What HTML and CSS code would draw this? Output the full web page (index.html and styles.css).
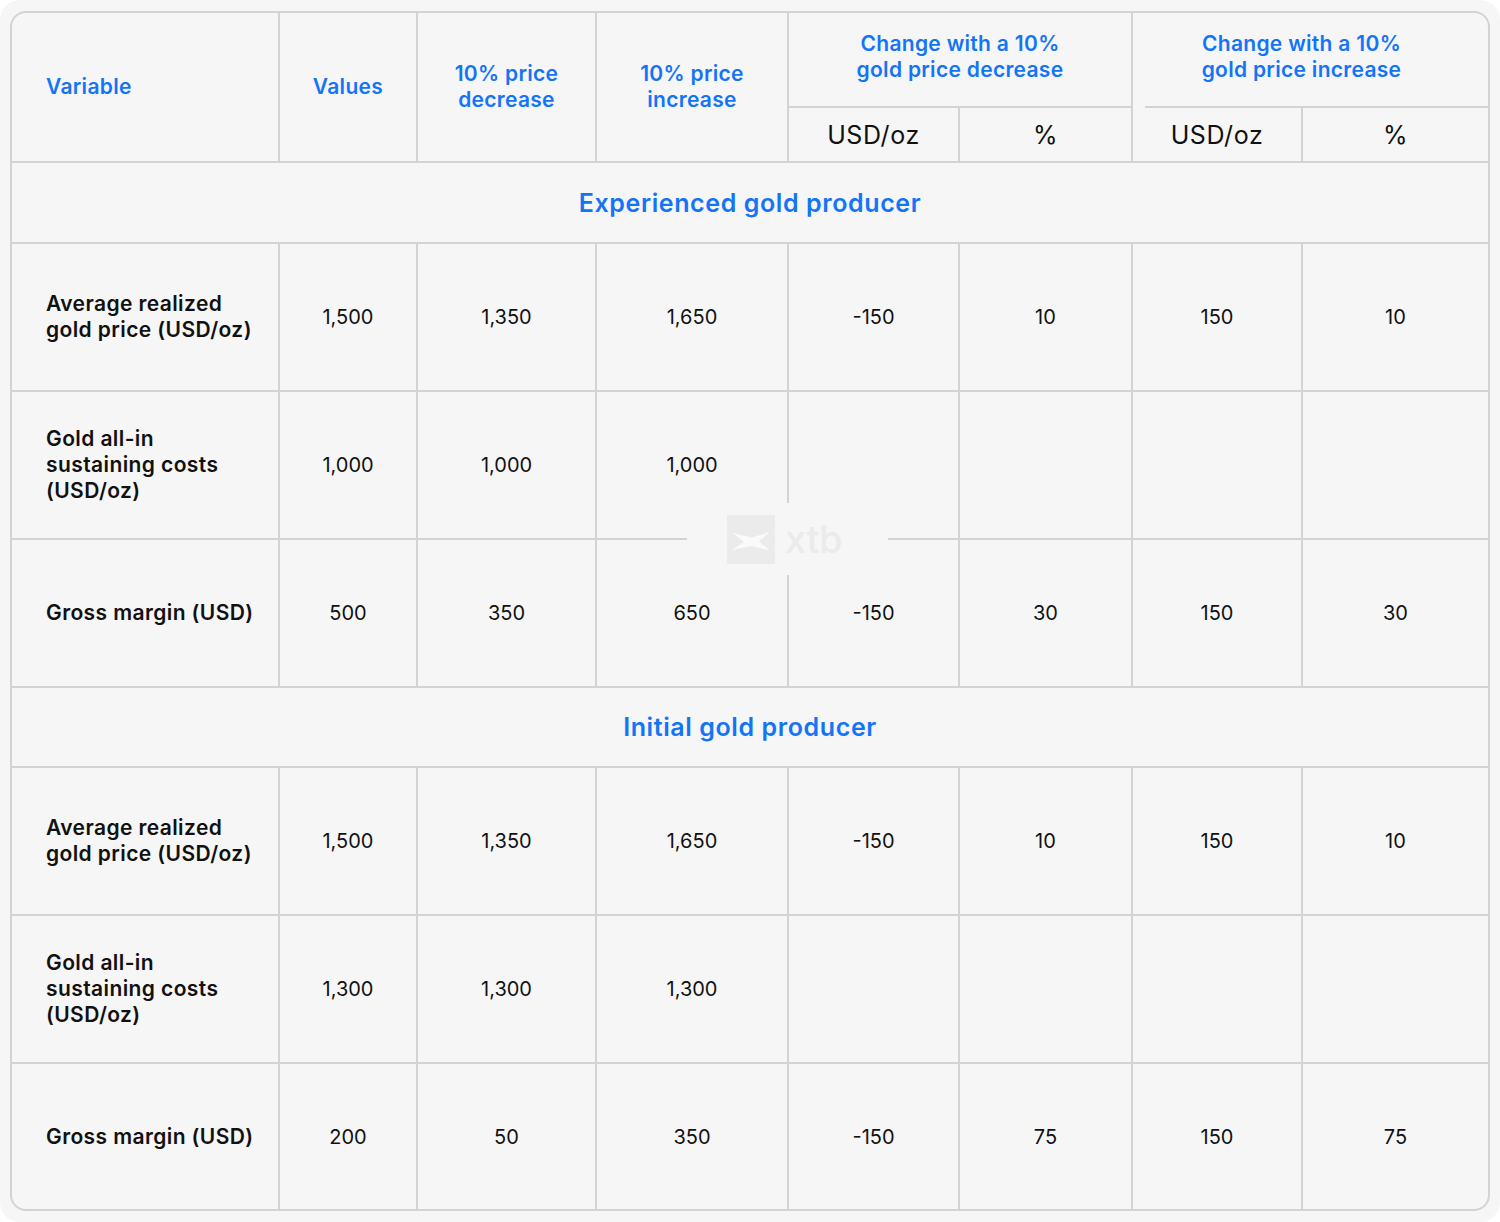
FILE: index.html
```html
<!DOCTYPE html>
<html lang="en">
<head>
<meta charset="utf-8">
<title>Gold producer sensitivity</title>
<link rel="stylesheet" href="styles.css">
</head>
<body>
<div class="page">
  <div class="table">
    <div class="cell head label-col span-h">Variable</div>
    <div class="cell head span-h">Values</div>
    <div class="cell head span-h">10% price<br>decrease</div>
    <div class="cell head span-h">10% price<br>increase</div>
    <div class="cell head group">Change with a 10%<br>gold price decrease</div>
    <div class="cell head group group-last">Change with a 10%<br>gold price increase</div>
    <div class="cell sub">USD/oz</div>
    <div class="cell sub">%</div>
    <div class="cell sub">USD/oz</div>
    <div class="cell sub">%</div>

    <div class="cell section">Experienced gold producer</div>

    <div class="cell label">Average realized<br>gold price (USD/oz)</div>
    <div class="cell num">1,500</div>
    <div class="cell num">1,350</div>
    <div class="cell num">1,650</div>
    <div class="cell num">-150</div>
    <div class="cell num">10</div>
    <div class="cell num">150</div>
    <div class="cell num">10</div>

    <div class="cell label">Gold all-in<br>sustaining costs<br>(USD/oz)</div>
    <div class="cell num">1,000</div>
    <div class="cell num">1,000</div>
    <div class="cell num">1,000</div>
    <div class="cell num"></div>
    <div class="cell num"></div>
    <div class="cell num"></div>
    <div class="cell num"></div>

    <div class="cell label">Gross margin (USD)</div>
    <div class="cell num">500</div>
    <div class="cell num">350</div>
    <div class="cell num">650</div>
    <div class="cell num">-150</div>
    <div class="cell num">30</div>
    <div class="cell num">150</div>
    <div class="cell num">30</div>

    <div class="cell section">Initial gold producer</div>

    <div class="cell label">Average realized<br>gold price (USD/oz)</div>
    <div class="cell num">1,500</div>
    <div class="cell num">1,350</div>
    <div class="cell num">1,650</div>
    <div class="cell num">-150</div>
    <div class="cell num">10</div>
    <div class="cell num">150</div>
    <div class="cell num">10</div>

    <div class="cell label">Gold all-in<br>sustaining costs<br>(USD/oz)</div>
    <div class="cell num">1,300</div>
    <div class="cell num">1,300</div>
    <div class="cell num">1,300</div>
    <div class="cell num"></div>
    <div class="cell num"></div>
    <div class="cell num"></div>
    <div class="cell num"></div>

    <div class="cell label">Gross margin (USD)</div>
    <div class="cell num">200</div>
    <div class="cell num">50</div>
    <div class="cell num">350</div>
    <div class="cell num">-150</div>
    <div class="cell num">75</div>
    <div class="cell num">150</div>
    <div class="cell num">75</div>

    <div class="watermark">
      <svg class="wm-logo" width="48" height="49" viewBox="0 0 48 49" aria-hidden="true">
        <rect width="48" height="49" fill="#ebebeb"/>
        <path d="M6 18 L25 22.5 L43 17 L32 26.5 L43 35.5 L24 31 L5 35 L17 27 Z" fill="#fafafa"/>
      </svg>
      <span class="wm-text">xtb</span>
    </div>
  </div>
</div>
</body>
</html>
```

FILE: styles.css
```css
* {
  box-sizing: border-box;
}

html, body {
  margin: 0;
  padding: 0;
  background: #ffffff;
}

body {
  font-family: "Inter", "Noto Sans", "Liberation Sans", sans-serif;
  color: #111111;
}

.page {
  width: 1500px;
  height: 1222px;
  background: #f6f6f6;
  border-radius: 20px;
  padding: 11px 10px;
}

.table {
  position: relative;
  width: 1480px;
  height: 1200px;
  display: grid;
  grid-template-columns: 266px 136px 177px 190px 169px 171px 168px 185px;
  grid-template-rows: 93px 53px 79px 146px 146px 146px 78px 146px 146px 145px;
  gap: 2px;
  background: #d3d3d3;
  border: 2px solid #d3d3d3;
  border-radius: 16px;
  overflow: hidden;
}

.cell {
  background: #f6f6f6;
  display: flex;
  align-items: center;
  justify-content: center;
  text-align: center;
  position: relative;
}

.head {
  color: #1474f7;
  font-weight: 600;
  font-size: 21px;
  letter-spacing: 0.3px;
  line-height: 26px;
}

.span-h {
  grid-row: span 2;
}

.label-col {
  justify-content: flex-start;
  text-align: left;
  padding-left: 34px;
}

.group {
  grid-column: span 2;
  padding-bottom: 6px;
}

.group-last {
  padding-right: 18px;
}

.group-last::after {
  content: "";
  position: absolute;
  left: 0;
  bottom: -2px;
  width: 12px;
  height: 2px;
  background: #f6f6f6;
}

.sub {
  font-size: 25px;
  font-weight: 400;
  letter-spacing: 0.6px;
  color: #111111;
}

.section {
  grid-column: 1 / -1;
  color: #1474f7;
  font-size: 25px;
  font-weight: 600;
  letter-spacing: 0.6px;
}

.label {
  justify-content: flex-start;
  text-align: left;
  padding-left: 34px;
  font-size: 21px;
  font-weight: 600;
  letter-spacing: 0.4px;
  line-height: 26px;
  color: #111111;
}

.num {
  font-size: 20px;
  font-weight: 400;
  color: #111111;
}

.watermark {
  position: absolute;
  left: 675px;
  top: 490px;
  width: 201px;
  height: 72px;
  background: #f6f6f6;
  display: flex;
  align-items: center;
  justify-content: center;
  gap: 10px;
  padding-right: 6px;
}

.wm-logo {
  display: block;
}

.wm-text {
  font-size: 38px;
  font-weight: 500;
  color: #ebebeb;
  letter-spacing: -0.5px;
  line-height: 1;
}
```
